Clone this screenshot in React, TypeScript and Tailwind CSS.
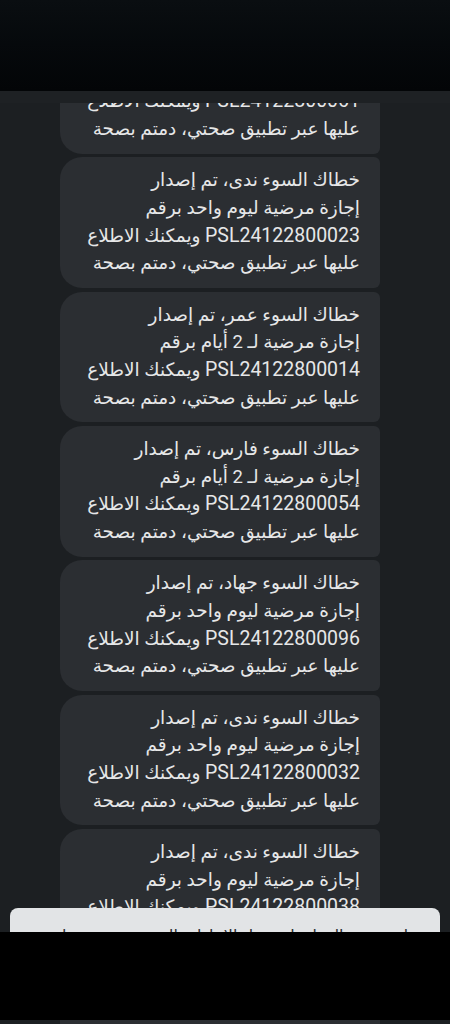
import React from 'react';

interface Message {
  id: number;
  name: string;
  duration: string;
  number: string;
}

const messages: Message[] = [
  { id: 1, name: 'سارة', duration: 'ليوم واحد', number: 'PSL24122800061' },
  { id: 2, name: 'ندى', duration: 'ليوم واحد', number: 'PSL24122800023' },
  { id: 3, name: 'عمر', duration: 'لـ 2 أيام', number: 'PSL24122800014' },
  { id: 4, name: 'فارس', duration: 'لـ 2 أيام', number: 'PSL24122800054' },
  { id: 5, name: 'جهاد', duration: 'ليوم واحد', number: 'PSL24122800096' },
  { id: 6, name: 'ندى', duration: 'ليوم واحد', number: 'PSL24122800032' },
  { id: 7, name: 'ندى', duration: 'ليوم واحد', number: 'PSL24122800038' },
];

function Bubble({ msg }: { msg: Message }) {
  return (
    <div
      dir="rtl"
      className="w-[320px] shrink-0 rounded-l-[22px] rounded-r-[6px] bg-[#2b2e32] pr-5 pl-4 pt-[10px] pb-[10px] text-right text-[18.5px] leading-[27.7px] text-[#e6e7e8]"
    >
      <div className="h-[27.7px]">خطاك السوء {msg.name}، تم إصدار</div>
      <div className="h-[27.7px]">إجازة مرضية {msg.duration} برقم</div>
      <div className="h-[27.7px]">
        <span className="text-[19.5px] leading-none">{msg.number}</span> ويمكنك الاطلاع
      </div>
      <div className="h-[27.7px]">عليها عبر تطبيق صحتي، دمتم بصحة</div>
    </div>
  );
}

export default function App() {
  return (
    <div
      className="flex h-[1024px] w-[450px] flex-col overflow-hidden bg-black"
      style={{ fontFamily: 'Roboto, "DejaVu Sans", "Noto Sans", sans-serif' }}
    >
      <div className="h-[91px] shrink-0 bg-gradient-to-b from-[#0a0e11] to-[#030507]" />

      <div className="relative h-[841px] shrink-0 overflow-hidden bg-[#1c1f22]">
        <div className="-mt-[68px] flex flex-col gap-[3.6px] pl-[60px]">
          {messages.map((m) => (
            <Bubble key={m.id} msg={m} />
          ))}
        </div>

        {/* header band over the top of the list */}
        <div className="absolute left-0 right-0 top-0 h-[12px] bg-[#1e2124]" />

        <div className="absolute bottom-0 left-[10px] right-[10px] h-[24px] overflow-hidden rounded-t-[8px] bg-[#e2e4e6]">
          <div
            dir="rtl"
            className="px-8 pt-[17px] text-right text-[16px] leading-[22px] text-[#2a2d31]"
          >
            لمزيد من المعلومات حول الإجازات المرضية يرجى زيارة الموقع
          </div>
        </div>
      </div>

      <div className="h-[88px] shrink-0 bg-black" />

      <div className="flex h-[4px] shrink-0 bg-[#1c1f22] pl-[60px]">
        <div className="w-[320px] bg-[#2b2e32]" />
      </div>
    </div>
  );
}
